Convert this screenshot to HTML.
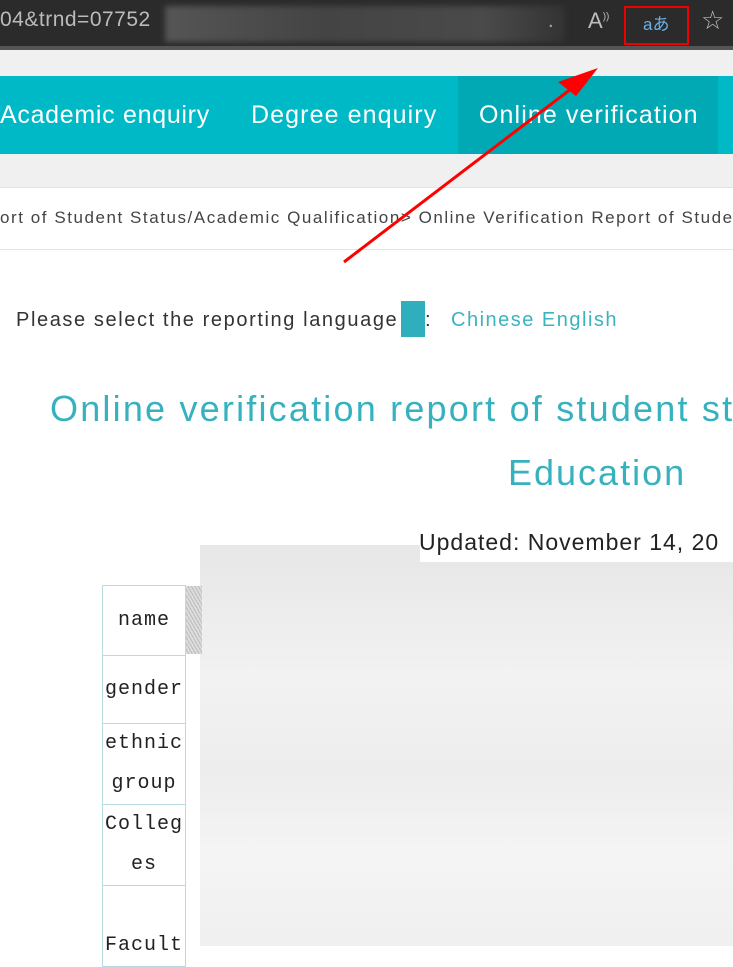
<!DOCTYPE html>
<html><head><meta charset="utf-8"><style>
body{margin:0;width:733px;height:946px;overflow:hidden;position:relative;background:#fff;font-family:"Liberation Sans",sans-serif}
.a{position:absolute;white-space:nowrap}
td{border:1px solid #b7dbe2;font-family:"Liberation Mono",monospace;font-size:20px;letter-spacing:1px;color:#222;text-align:center;line-height:40px;padding:0;width:82px;word-break:break-all;white-space:normal}
table{border-collapse:collapse;position:absolute;left:102px;top:585px}
</style></head><body>
<div class="a" style="left:0;top:0;width:733px;height:46px;background:#2b2b2b"></div>
<div class="a" style="left:0;top:46px;width:733px;height:4px;background:#555"></div>
<div class="a" style="left:0;top:8px;font-size:21px;color:#bbb;letter-spacing:0.5px">04&amp;trnd=07752</div>
<div class="a" style="left:165px;top:6px;width:400px;height:36px;background:linear-gradient(90deg,#555,#444 40%,#4a4a4a 80%,#333);filter:blur(3px)"></div>
<div class="a" style="left:548px;top:10px;font-size:20px;color:#aaa">.</div>
<div class="a" style="left:588px;top:8px;font-size:22px;color:#bbb">A<sup style="font-size:10px">))</sup></div>
<div class="a" style="left:624px;top:6px;width:65px;height:39px;border:2px solid #e00;box-sizing:border-box"></div>
<div class="a" style="left:643px;top:10px;font-size:17px;color:#6ab0e8;font-family:'Liberation Sans','Noto Sans CJK JP',sans-serif">aあ</div>
<div class="a" style="left:701px;top:5px;font-size:26px;color:#bbb">☆</div>
<div class="a" style="left:0;top:50px;width:733px;height:26px;background:#f0f0f0"></div>
<div class="a" style="left:0;top:76px;width:733px;height:78px;background:#00b9c6"></div>
<div class="a" style="left:458px;top:76px;width:260px;height:78px;background:#00a9b4"></div>
<div class="a" style="left:0;top:101px;font-size:25px;color:#fff;letter-spacing:0.7px">Academic enquiry</div>
<div class="a" style="left:251px;top:101px;font-size:25px;color:#fff;letter-spacing:1.1px">Degree enquiry</div>
<div class="a" style="left:479px;top:101px;font-size:25px;color:#fff;letter-spacing:1.1px">Online verification</div>
<div class="a" style="left:0;top:154px;width:733px;height:33px;background:#f0f0f0"></div>
<div class="a" style="left:0;top:187px;width:733px;height:63px;background:#fff;border-top:1px solid #e4e4e4;border-bottom:1px solid #e4e4e4;box-sizing:border-box"></div>
<div class="a" style="left:0;top:208px;font-size:17px;color:#444;letter-spacing:1.55px">ort of Student Status/Academic Qualification&gt; Online Verification Report of Stude</div>
<div class="a" style="left:16px;top:309px;font-size:20px;color:#333;letter-spacing:1.6px">Please select the reporting language</div>
<div class="a" style="left:401px;top:301px;width:24px;height:36px;background:#2faebc"></div>
<div class="a" style="left:425px;top:309px;font-size:20px;color:#333">:</div>
<div class="a" style="left:451px;top:309px;font-size:20px;color:#3ab3c0;letter-spacing:1.5px">Chinese English</div>
<div class="a" style="left:50px;top:388px;font-size:36px;color:#36b1c0;letter-spacing:2.2px">Online verification report of student st</div>
<div class="a" style="left:508px;top:452px;font-size:36px;color:#36b1c0;letter-spacing:2px">Education</div>
<div class="a" style="left:419px;top:529px;font-size:23px;color:#222;letter-spacing:1px">Updated: November 14, 20</div>
<table>
<tr><td style="height:69px">name</td></tr>
<tr><td style="height:67px">gender</td></tr>
<tr><td style="height:80px">ethnic group</td></tr>
<tr><td style="height:79px">Colleges</td></tr>
<tr><td style="height:80px;vertical-align:bottom">Facult</td></tr>
</table>
<div class="a" style="left:200px;top:545px;width:220px;height:20px;background:#e8e8e8"></div>
<div class="a" style="left:200px;top:562px;width:533px;height:384px;background:linear-gradient(180deg,#e8e8e8 0%,#f2f2f2 30%,#ededed 55%,#f4f4f4 75%,#f0f0f0 100%)"></div>
<div class="a" style="left:186px;top:586px;width:16px;height:68px;background:repeating-linear-gradient(60deg,#ddd 0 2px,#bbb 2px 3px)"></div>
<svg class="a" style="left:0;top:0" width="733" height="946"><line x1="344" y1="262" x2="588" y2="76" stroke="#f00" stroke-width="3"/><polygon points="598,68 558,82 576,96" fill="#f00"/></svg>
</body></html>
